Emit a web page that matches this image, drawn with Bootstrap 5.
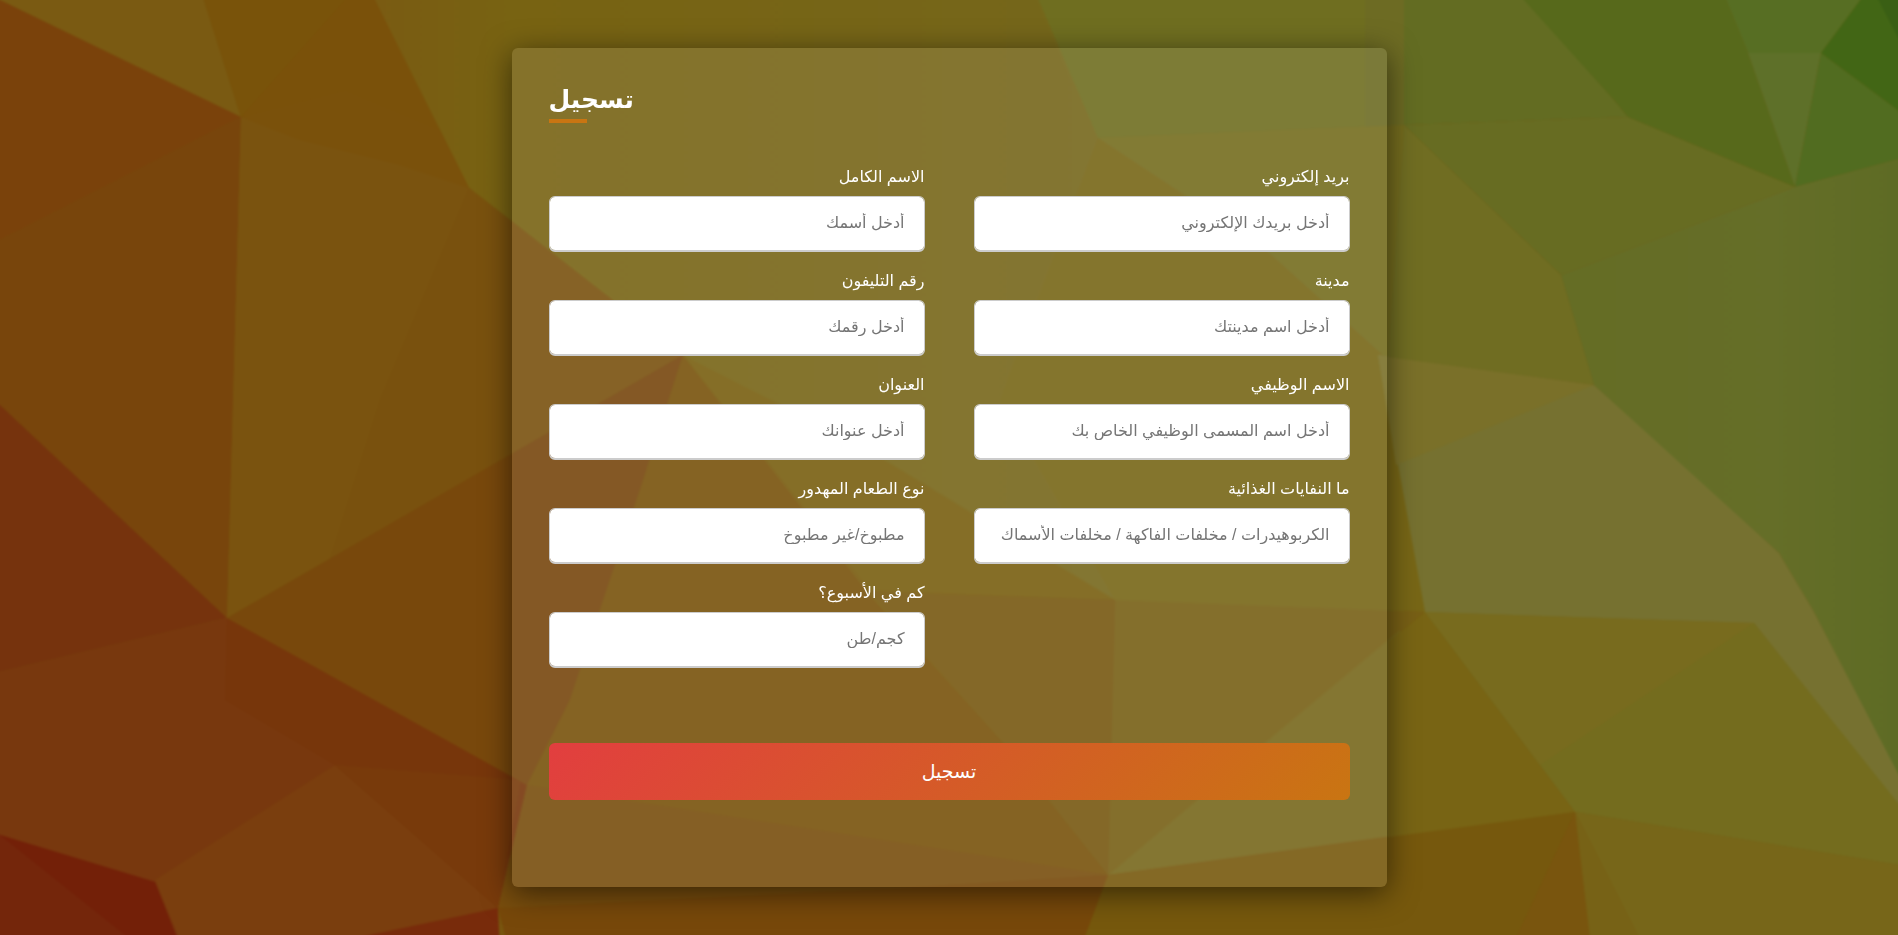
<!DOCTYPE html>
<html lang="ar">
<head>
<meta charset="utf-8">
<meta name="viewport" content="width=device-width, initial-scale=1">
<title>تسجيل</title>
<link href="https://cdn.jsdelivr.net/npm/bootstrap@5.3.0/dist/css/bootstrap.min.css" rel="stylesheet">
<style>
body { font-family: "Liberation Sans", "DejaVu Sans", sans-serif; background: #78520f; }
.backdrop { z-index: -1; }
.signup { max-width: 875px; padding: 37px 37px 87px; border-radius: 6px; background: rgba(255,255,255,.1); box-shadow: 0 6px 30px rgba(0,0,0,.55); }
.signup h1 { font-size: 25px; line-height: 28px; padding-bottom: 10px; margin-bottom: 42px; }
.signup h1::after { content: ""; position: absolute; left: 0; bottom: 0; width: 38px; height: 4px; background: #c97512; }
.fields { --bs-gutter-x: 49px; --bs-gutter-y: 17px; margin-bottom: 75px; }
.fields label { font-size: 16px; line-height: 24px; margin-bottom: 7px; }
.fields .form-control { height: 56px; padding: 0 19px 2px; font-size: 16px; line-height: 24px; border: 1px solid #ccc; border-bottom-width: 2px; border-radius: 6px; }
.fields .form-control::placeholder { color: #757575; }
.send { height: 57px; border-radius: 6px; color: #fff; font-size: 19px; line-height: 28px; background: linear-gradient(135deg, #e23e3f, #c97512); }
.send:hover { color: #fff; background: linear-gradient(-135deg, #e23e3f, #c97512); }
</style>
</head>
<body>
<svg class="backdrop position-fixed top-0 start-0 w-100 h-100" viewBox="0 0 1898 935" preserveAspectRatio="xMidYMid slice" aria-hidden="true">
  <defs>
    <linearGradient id="sky" gradientUnits="userSpaceOnUse" x1="375" y1="0" x2="1404" y2="0"><stop offset="0" stop-color="#7a5b12"/><stop offset=".13" stop-color="#786312"/><stop offset="1" stop-color="#746920"/></linearGradient>
    <linearGradient id="leaf"><stop offset="0" stop-color="#656d25"/><stop offset=".6" stop-color="#656e28"/><stop offset="1" stop-color="#5d6b24"/></linearGradient>
    <filter id="soft" filterUnits="userSpaceOnUse" x="-20" y="-20" width="1938" height="975" color-interpolation-filters="sRGB"><feGaussianBlur stdDeviation="1"/></filter>
  </defs>
  <g filter="url(#soft)">
  <path fill="#78560f" d="M-20-20H1918V955H-20Z"/>
  <path fill="url(#sky)" d="M365-20H1404V620H870L683 355 469 188Z"/>
  <path fill="#7a5a12" d="M0 0-20-20H200L204 0 241 117Z"/>
  <path fill="#7a510a" d="M204 0 200-20H365L375 0 469 188 241 330V117Z"/>
  <path fill="#79530a" d="M204 0 200-20H360L345 0 241 117Z"/>
  <path fill="#7a420b" d="M-20-10 0 0 241 117 0 240-20 250Z"/>
  <path fill="#78450c" d="M-20 250 0 240 241 117 227 618 0 405-20 386Z"/>
  <path fill="#7a530f" d="M241 117 345 120 469 188 683 355 227 618Z"/>
  <path fill="#7a510b" d="M241 117 345 90 440 130 469 188 400 165 300 140Z"/>
  <path fill="#79510e" d="M469 188 683 355 330 559 380 400Z"/>
  <path fill="#76330d" d="M-20 386 0 405 227 618 0 672-20 677Z"/>
  <path fill="#78380e" d="M-20 677 0 672 227 618 527 785 498 908 370 955H-20Z"/>
  <path fill="#77360b" d="M227 618 527 785 510 857 335 765 225 700Z"/>
  <path fill="#7a3e0e" d="M335 765 498 908 370 955H184L178 935 155 880Z"/>
  <path fill="#783a0b" d="M335 765 521 780 498 908Z"/>
  <path fill="#74260b" d="M-20 827 0 835 155 882 184 955H-20Z"/>
  <path fill="#732008" d="M0 835 155 882 184 955H150Z"/>
  <path fill="#78480c" d="M227 618 683 355 640 490 570 700 527 785Z"/>
  <path fill="#77460d" d="M513 453 683 355 640 490 570 700 527 785 513 777Z"/>
  <path fill="#78520b" d="M683 355 870 595 1005 745 1108 875 527 785 570 700 640 490Z"/>
  <path fill="#785b0e" d="M683 355 760 410 1115 600 1108 875 1005 745 870 595Z"/>
  <path fill="#785e0f" d="M683 355 860 445 1115 600 870 590Z"/>
  <path fill="#775710" d="M870 592 1115 600 1108 875 1005 745Z"/>
  <path fill="#784d0d" d="M527 785 1108 875 900 890 498 908Z"/>
  <path fill="#77480a" d="M498 908 900 888 1108 875 1080 955H510Z"/>
  <path fill="#782b0b" d="M290 955 370 935 498 908 500 955Z"/>
  <path fill="#6f6e20" d="M1030-20H1404V125L1098 138Z"/>
  <path fill="#6d6b23" d="M1365-20H1404V125L1365 127Z"/>
  <path fill="#746c1e" d="M1098 138 1404 125 1388 360 1260 245Z"/>
  <path fill="#776616" d="M1098 138 1260 245 1388 360 1425 612 1115 600 1000 400Z"/>
  <path fill="#775f15" d="M1115 600 1425 612 1262 745 1108 875Z"/>
  <path fill="#77671b" d="M1262 745 1400 630V835L1108 875Z"/>
  <path fill="#786414" d="M1388 642 1425 612 1575 812 1388 840Z"/>
  <path fill="#76580d" d="M1108 875 1575 812 1508 955H1078Z"/>
  <path fill="#79550e" d="M1575 812 1592 955H1508Z"/>
  <path fill="#776216" d="M1575 812 1648 955H1592Z"/>
  <path fill="#776619" d="M1575 812 1918 868V955H1648Z"/>
  <path fill="#746c1e" d="M1425 612 1754 623 1918 825V868L1575 812Z"/>
  <path fill="#786b1e" d="M1425 612 1754 623 1540 765Z"/>
  <path fill="#767130" d="M1378 355 1594 385 1679 460 1779 553 1813 610 1918 810V828L1754 623 1425 612Z"/>
  <path fill="#7a7029" d="M1378 355 1594 385 1396 465Z"/>
  <path fill="#706d22" d="M1404 125 1561 275 1594 385 1388 357Z"/>
  <path fill="#676c22" d="M1404 125 1628 117 1795 187 1561 275Z"/>
  <path fill="#636c22" d="M1404-20H1510L1614 100 1628 117 1404 125Z"/>
  <path fill="#57691b" d="M1524 0 1510-20H1718L1748 53 1795 187 1628 117 1614 100Z"/>
  <path fill="#576e23" d="M1718-20H1875L1821 53H1748Z"/>
  <path fill="#5e7029" d="M1748 53H1821L1795 187Z"/>
  <path fill="#516c20" d="M1821 53 1918 125V154L1795 187Z"/>
  <path fill="#426615" d="M1875-20H1918V125L1821 53Z"/>
  <path fill="#3a5f14" d="M1868-20H1918V76Z"/>
  <path fill="url(#leaf)" d="M1795 187 1918 154V812L1813 610 1779 553 1594 385 1561 275Z"/>
  </g>
</svg>

<main class="min-vh-100 d-flex align-items-center justify-content-center py-4">
  <form class="signup w-100 text-white">
    <h1 class="position-relative fw-bold text-start" dir="ltr">تسجيل</h1>
    <div class="row fields">
      <div class="col-md-6 text-end">
        <label class="d-block" for="fullname">الاسم الكامل</label>
        <input class="form-control text-end" id="fullname" type="text" placeholder="أدخل أسمك">
      </div>
      <div class="col-md-6 text-end">
        <label class="d-block" for="email">بريد إلكتروني</label>
        <input class="form-control text-end" id="email" type="text" placeholder="أدخل بريدك الإلكتروني">
      </div>
      <div class="col-md-6 text-end">
        <label class="d-block" for="phone">رقم التليفون</label>
        <input class="form-control text-end" id="phone" type="text" placeholder="أدخل رقمك">
      </div>
      <div class="col-md-6 text-end">
        <label class="d-block" for="city">مدينة</label>
        <input class="form-control text-end" id="city" type="text" placeholder="أدخل اسم مدينتك">
      </div>
      <div class="col-md-6 text-end">
        <label class="d-block" for="address">العنوان</label>
        <input class="form-control text-end" id="address" type="text" placeholder="أدخل عنوانك">
      </div>
      <div class="col-md-6 text-end">
        <label class="d-block" for="job">الاسم الوظيفي</label>
        <input class="form-control text-end" id="job" type="text" placeholder="أدخل اسم المسمى الوظيفي الخاص بك">
      </div>
      <div class="col-md-6 text-end">
        <label class="d-block" for="foodtype">نوع الطعام المهدور</label>
        <input class="form-control text-end" id="foodtype" type="text" placeholder="مطبوخ/غير مطبوخ">
      </div>
      <div class="col-md-6 text-end">
        <label class="d-block" for="waste">ما النفايات الغذائية</label>
        <input class="form-control text-end" id="waste" type="text" placeholder="الكربوهيدرات / مخلفات الفاكهة / مخلفات الأسماك">
      </div>
      <div class="col-md-6 text-end">
        <label class="d-block" for="amount" dir="auto">كم في الأسبوع؟</label>
        <input class="form-control text-end" id="amount" type="text" placeholder="كجم/طن">
      </div>
    </div>
    <button class="btn send w-100 border-0" type="submit">تسجيل</button>
  </form>
</main>
<script src="https://cdn.jsdelivr.net/npm/bootstrap@5.3.0/dist/js/bootstrap.bundle.min.js"></script>
</body>
</html>
